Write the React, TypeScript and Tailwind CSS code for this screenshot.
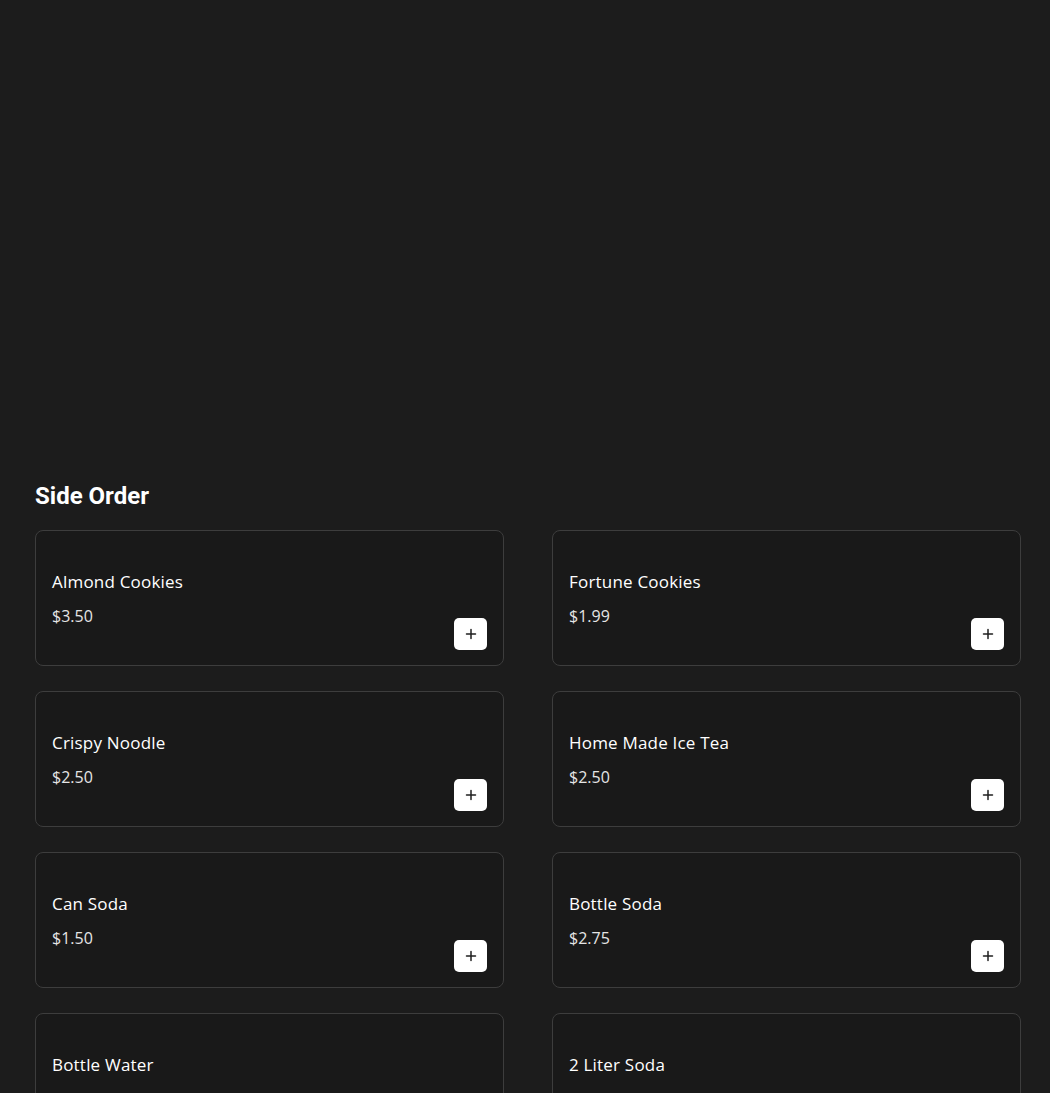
import React from "react";

const items = [
  { name: "Almond Cookies", price: "$3.50" },
  { name: "Fortune Cookies", price: "$1.99" },
  { name: "Crispy Noodle", price: "$2.50" },
  { name: "Home Made Ice Tea", price: "$2.50" },
  { name: "Can Soda", price: "$1.50" },
  { name: "Bottle Soda", price: "$2.75" },
  { name: "Bottle Water", price: "$1.00" },
  { name: "2 Liter Soda", price: "$3.50" },
];

function PlusIcon() {
  return (
    <svg width="12" height="12" viewBox="0 0 12 12" fill="none">
      <path d="M6 1.5v9M1.5 6h9" stroke="#1f1f1f" strokeWidth="1.5" strokeLinecap="round" />
    </svg>
  );
}

export default function App() {
  return (
    <div className="min-h-[1093px] bg-[#1c1c1c] pl-[35px] pr-[29px] pt-[480px]">
      <h2 className="text-[24px] leading-[32px] font-bold text-white" style={{ fontFamily: "Roboto, sans-serif" }}>
        Side Order
      </h2>
      <div className="mt-[18px] grid grid-cols-[469px_469px] gap-x-[48px] gap-y-[25px]">
        {items.map((it) => (
          <div
            key={it.name}
            className="flex h-[136px] justify-between rounded-[8px] border border-[#3d3d3d] bg-[#191919] px-4 pb-[15px] pt-4"
            style={{ fontFamily: "'Open Sans', sans-serif" }}
          >
            <div className="mt-[23px] flex flex-col">
              <div className="text-[17px] leading-[24px] font-medium tracking-[0.2px] text-white">{it.name}</div>
              <div className="mt-[10px] text-[16px] leading-[24px] text-[#e5e5e5]">{it.price}</div>
            </div>
            <button className="flex h-[32px] w-[33px] items-center justify-center self-end rounded-[5px] bg-white">
              <PlusIcon />
            </button>
          </div>
        ))}
      </div>
    </div>
  );
}
